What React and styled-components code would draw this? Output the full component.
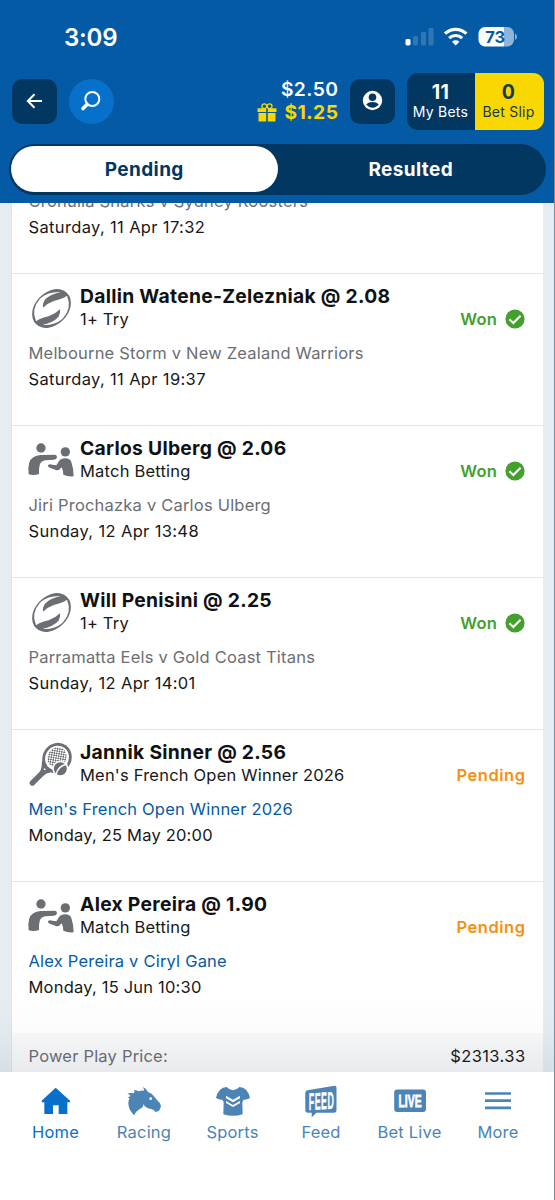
import React from "react";
import styled, { createGlobalStyle } from "styled-components";

const COLORS = {
  BLUE: "#045aa5",
  NAVY: "#023762",
  BRIGHT: "#0670cb",
  YELLOW: "#f8d800",
  GREEN: "#43a02c",
  ORANGE: "#f8900f",
  GREY: "#6b6e73",
  STEEL: "#4c84b6",
};

const GlobalStyle = createGlobalStyle`
  * {
    box-sizing: border-box;
  }
  body {
    margin: 0;
    background-color: #fff;
    font-family: Inter, "Liberation Sans", sans-serif;
  }
  svg {
    display: block;
    flex-shrink: 0;
    overflow: visible;
  }
`;

const Screen = styled.div`
  width: 555px;
  height: 1200px;
  display: flex;
  flex-direction: column;
  overflow: hidden;
  background-color: #fff;
  border-right: 1px solid #7d8b98;
`;
const Header = styled.header`
  height: 203px;
  flex-shrink: 0;
  background-color: ${COLORS.BLUE};
  margin-right: -1px;
  border-right: 1px solid #0d3c68;
`;
const StatusBar = styled.div`
  height: 72px;
  padding: 2px 37px 0 64px;
  display: flex;
  align-items: center;
  justify-content: space-between;
`;
const Clock = styled.span`
  color: #fff;
  font-size: 24px;
  font-weight: 600;
  letter-spacing: -0.2px;
`;
const Toolbar = styled.div`
  height: 58px;
  padding: 0 10px 0 12px;
  display: flex;
  align-items: center;
`;
const IconButton = styled.button`
  width: 45px;
  height: 45px;
  padding: 0;
  border: none;
  border-radius: ${(props) => (props.$round ? "50%" : "10px")};
  background-color: ${(props) => (props.$round ? COLORS.BRIGHT : COLORS.NAVY)};
  display: flex;
  align-items: center;
  justify-content: center;
  margin-right: ${(props) => (props.$round ? 0 : 12)}px;
`;
const Balance = styled.div`
  margin-left: auto;
  margin-right: 11.5px;
  display: flex;
  flex-direction: column;
  align-items: flex-end;
`;
const Amount = styled.div`
  display: flex;
  align-items: center;
  gap: 7px;
  color: ${(props) => (props.$bonus ? COLORS.YELLOW : "#fff")};
  font-size: 19.3px;
  line-height: 23px;
  font-weight: ${(props) => (props.$bonus ? 700 : 600)};
  letter-spacing: 0.45px;
`;
const Slips = styled.div`
  width: 137px;
  height: 57px;
  border-radius: 11px;
  overflow: hidden;
  display: flex;
`;
const Slip = styled.div`
  width: ${(props) => (props.$active ? 69 : 68)}px;
  padding: 8px ${(props) => (props.$active ? 2 : 1)}px 0 0;
  text-align: center;
  color: ${(props) => (props.$active ? "#173a4e" : "#fff")};
  background-color: ${(props) => (props.$active ? COLORS.YELLOW : COLORS.NAVY)};
  font-size: 14px;
  line-height: 16px;
  letter-spacing: 0.25px;
  white-space: nowrap;
`;
const Count = styled.div`
  font-size: 19.5px;
  line-height: 23px;
  font-weight: 700;
  letter-spacing: 0.4px;
`;
const Tabs = styled.div`
  height: 51px;
  margin: 14px 8px 0 9px;
  padding: 2px 2px 3px;
  border-radius: 26px;
  background-color: ${COLORS.NAVY};
  display: flex;
`;
const Tab = styled.div`
  flex: 1;
  border-radius: 23px;
  display: flex;
  align-items: center;
  justify-content: center;
  font-size: 19px;
  font-weight: 700;
  letter-spacing: 0.4px;
  color: ${(props) => (props.$active ? COLORS.NAVY : "#fff")};
  background-color: ${(props) => (props.$active ? "#fff" : "transparent")};
`;
const List = styled.main`
  height: 869px;
  flex-shrink: 0;
  padding: 0 11px;
  overflow: hidden;
  position: relative;
  background-color: #e5edf2;
`;
const Fade = styled.div`
  position: absolute;
  left: 0;
  right: 0;
  bottom: 0;
  height: 75px;
  background: linear-gradient(rgba(40, 50, 80, 0), rgba(40, 50, 80, 0.02) 50%, rgba(40, 50, 80, 0.075));
`;
const Card = styled.div`
  background-color: #fff;
  border-left: 1px solid #dce4ea;
`;
const Leg = styled.section`
  height: 152px;
  padding: 0 18px 0 16.5px;
  border-top: 1px solid #e1e4ea;
`;
const PartialLeg = styled.section`
  height: 70px;
  padding: 0 18px 33px 16.5px;
  display: flex;
  flex-direction: column;
  justify-content: flex-end;
`;
const LegTop = styled.div`
  height: 66px;
  display: flex;
`;
const LegIcon = styled.div`
  width: 52px;
  margin-left: -0.5px;
  padding-top: 12.5px;
`;
const LegText = styled.div`
  flex: 1;
  padding-top: 10px;
`;
const LegTitle = styled.div`
  font-size: 19.3px;
  line-height: 24px;
  font-weight: 700;
  letter-spacing: 0.28px;
  color: #101113;
  white-space: nowrap;
`;
const Line = styled.div`
  font-size: 16.5px;
  line-height: ${(props) => props.$height || 26}px;
  letter-spacing: ${(props) => props.$spacing || 0.2}px;
  color: ${(props) => props.$color || "#17181a"};
  white-space: nowrap;
`;
const Status = styled.div`
  height: 26px;
  margin-top: 32px;
  margin-right: ${(props) => (props.$won ? 0 : -0.5)}px;
  display: flex;
  align-items: center;
  gap: 8px;
  font-size: 16.5px;
  font-weight: 600;
  letter-spacing: ${(props) => (props.$won ? 0.2 : 0.5)}px;
  color: ${(props) => (props.$won ? COLORS.GREEN : COLORS.ORANGE)};
`;
const PriceRow = styled.div`
  height: 59px;
  padding: 10px 17.5px 0 16.5px;
  background-color: #f8f9fa;
  display: flex;
  justify-content: space-between;
`;
const Nav = styled.nav`
  height: 128px;
  flex-shrink: 0;
  padding: 0 12px 0 11px;
  display: flex;
`;
const NavItem = styled.div`
  flex: 1;
  display: flex;
  flex-direction: column;
  align-items: center;
  padding: 11px 0 0 0.5px;
  font-size: 16.5px;
  line-height: 26px;
  letter-spacing: 0.2px;
  white-space: nowrap;
  color: ${(props) => (props.$active ? COLORS.BRIGHT : COLORS.STEEL)};
`;

const StatusIcons = () => (
  <svg width="112" height="22" viewBox="405 26 112 22">
    <rect x="405.5" y="39" width="5" height="6.5" rx="1.4" fill="#fff" />
    <g fill="#2f76b5">
      <rect x="413" y="36" width="5" height="9.5" rx="1.4" />
      <rect x="421" y="32" width="5" height="13.5" rx="1.4" />
      <rect x="428.5" y="28" width="5" height="17.5" rx="1.4" />
    </g>
    <g fill="none" stroke="#fff" strokeWidth="3.2">
      <path d="M445 33.7a15.3 15.3 0 0 1 21.4 0" />
      <path d="M449.2 38.1a9.4 9.4 0 0 1 13 0" />
    </g>
    <path d="M455.7 45.5l-3.7-3.8a5.4 5.4 0 0 1 7.4 0z" fill="#fff" />
    <path d="M485 27h19v19.5h-19a6.5 6.5 0 0 1-6.5-6.5v-6.5a6.5 6.5 0 0 1 6.5-6.5z" fill="#fff" />
    <path d="M504 27h3.5a6.5 6.5 0 0 1 6.5 6.5v6.5a6.5 6.5 0 0 1-6.5 6.5h-3.5z" fill="#8db5da" />
    <path d="M515 33.5q2 1.2 2 3.3t-2 3.3z" fill="#8db5da" />
    <text x="495.3" y="42.6" textAnchor="middle" fontSize="16.5" fontWeight="700" fill={COLORS.BLUE}>
      73
    </text>
  </svg>
);

const BackIcon = () => (
  <svg width="18" height="16" viewBox="0 0 18 16" fill="none" stroke="#fff" strokeWidth="2">
    <path d="M16 8H2M8.5 1.2L1.8 8l6.7 6.8" />
  </svg>
);

const SearchIcon = () => (
  <svg width="20" height="20" viewBox="0.5 0 20 20" fill="none" stroke="#fff">
    <circle cx="10.8" cy="8" r="7" strokeWidth="2" />
    <path d="M5.5 13.5L1.5 17.5" strokeWidth="3.6" strokeLinecap="round" />
  </svg>
);

const GiftIcon = () => (
  <svg width="20" height="19" viewBox="0 0 20 19" fill={COLORS.YELLOW}>
    <g fill="none" stroke={COLORS.YELLOW} strokeWidth="1.3">
      <circle cx="7.3" cy="3.2" r="2.4" />
      <circle cx="12.6" cy="3.2" r="2.4" />
    </g>
    <path d="M.5 5.3h8.7v3.7H.5zM10.8 5.3h8.7v3.7h-8.7zM1.5 10h7.7v8.5H1.5zM10.8 10h7.7v8.5h-7.7z" />
  </svg>
);

const ProfileIcon = () => (
  <svg width="20" height="20" viewBox="0.5 0.5 20 20">
    <circle cx="10" cy="10" r="9.7" fill="#fff" />
    <circle cx="10" cy="6.8" r="3.8" fill={COLORS.NAVY} />
    <path d="M3.8 13.8q2.2-2.2 6.2-2.2t6.2 2.2q-2.3 3.4-6.2 3.4t-6.2-3.4z" fill={COLORS.NAVY} />
  </svg>
);

const TickIcon = () => (
  <svg width="20" height="20" viewBox="0 0 20 20">
    <circle cx="10" cy="10" r="9.6" fill={COLORS.GREEN} />
    <path d="M4.4 10.3l3.9 3.8 7.3-7.4" fill="none" stroke="#fff" strokeWidth="2.1" />
  </svg>
);

const RugbyIcon = () => (
  <svg width="47" height="45" viewBox="84 49 141 135">
    <ellipse cx="154.5" cy="113.5" rx="66" ry="49" transform="rotate(-45 154.5 113.5)" fill={COLORS.GREY} />
    <path
      d="M108 152Q92 116 121 83Q146 62 182 64Q148 72 134 88Q127 99 129 111Q143 97 163 90Q189 84 201 75Q217 111 188 144Q163 165 127 163Q161 155 175 139Q182 128 180 116Q166 130 146 137Q120 143 108 152Z"
      fill="#fff"
    />
  </svg>
);

const FightIcon = () => (
  <svg width="47" height="45" viewBox="84 505 141 135" fill={COLORS.GREY}>
    <circle cx="123" cy="532" r="14" />
    <circle cx="196" cy="543.5" r="14" />
    <path d="M86 611Q81 571 100 560Q108 554 122 553L165 552Q171 553 171 560Q170 567 162 567L137 569Q122 571 119 583Q116 595 117 610Q101 615 86 611Z" />
    <path d="M144 584Q148 579 157 582L169 584Q173 579 177 571Q183 563 196 563Q210 563 214 574Q221 594 221 617Q204 619 190 612Q190 601 185 590Q178 600 169 599Q160 595 149 591Q142 588 144 584Z" />
  </svg>
);

const TennisIcon = () => (
  <svg width="47" height="45" viewBox="84 518 141 135">
    <defs>
      <pattern id="strings" width="10" height="10" patternUnits="userSpaceOnUse" patternTransform="rotate(20)">
        <rect width="10" height="10" fill="#fff" />
        <rect width="5" height="5" fill={COLORS.GREY} />
        <rect x="5" y="5" width="5" height="5" fill={COLORS.GREY} />
      </pattern>
    </defs>
    <path d="M97 638L124 611" stroke={COLORS.GREY} strokeWidth="16" strokeLinecap="round" />
    <path d="M118 606Q126 597 126 570L153 606Q139 608 130 616Z" fill={COLORS.GREY} />
    <ellipse cx="171" cy="563" rx="39" ry="42" transform="rotate(35 171 563)" fill="#fff" stroke={COLORS.GREY} strokeWidth="8.5" />
    <ellipse cx="171" cy="561" rx="28" ry="31" transform="rotate(35 171 561)" fill="url(#strings)" />
    <path d="M130 598l8 1-4-6z" fill="#fff" />
    <circle cx="181" cy="595" r="24" fill="#fff" />
    <circle cx="181" cy="595" r="19.5" fill={COLORS.GREY} />
    <path d="M168 613Q172 588 202 581" fill="none" stroke="#fff" strokeWidth="4" />
  </svg>
);

const HomeIcon = () => (
  <svg width="34" height="36" viewBox="116 156 102 108" fill={COLORS.BRIGHT}>
    <path d="M166 170L209 209V214H201V249H175V223H158V249H132V214H124V209Z" />
  </svg>
);

const HorseIcon = () => (
  <svg width="36" height="36" viewBox="379 156 108 108" fill={COLORS.STEEL}>
    <path d="M404 253Q386 237 386 216Q386 207 390 201L384 201Q388 196 393 195Q389 189 383 188Q392 184 402 187Q407 182 403 177Q412 178 418 181Q424 178 434 179L430 168Q441 173 445 183Q457 187 464 197L470 205Q481 214 484 226Q482 235 477 240L467 243Q464 236 454 234Q439 233 431 220Q431 231 420 234Q409 240 404 253Z" />
    <circle cx="453" cy="203" r="4" fill="#fff" />
  </svg>
);

const ShirtIcon = () => (
  <svg width="36" height="36" viewBox="645 156 108 108" fill={COLORS.STEEL}>
    <path d="M680 168Q699 188 718 168Q730 168 738 176Q747 186 750 201Q740 207 731 206L727 213L728 250Q699 259 670 250L671 213L667 206Q657 207 648 201Q651 186 660 176Q668 168 680 168Z" />
    <path d="M678 194L699 206L720 194V202L699 214L678 202ZM678 210L699 222L720 210V216L699 228L678 216Z" fill="#fff" />
  </svg>
);

const FeedIcon = () => (
  <svg width="34" height="36" viewBox="0 0 34 36">
    <path
      d="M3.5 7.2L30.5 2.8Q32.5 2.6 32.5 4.8V27Q32.5 29.7 30 29.7H12.5L7.7 34.2V29.7H4Q1.3 29.7 1.3 27V10Q1.3 7.5 3.5 7.2Z"
      fill={COLORS.STEEL}
    />
    <text
      transform="translate(4.8 27) skewY(-3) scale(.37 1)"
      fontSize="24"
      fontWeight="700"
      fontFamily="Liberation Sans"
      fill="#fff"
      stroke="#fff"
      strokeWidth=".5"
      textLength="68"
      lengthAdjust="spacing"
    >
      FEED
    </text>
  </svg>
);

const LiveIcon = () => (
  <svg width="34" height="36" viewBox="0 0 34 36">
    <rect x="1.2" y="6.5" width="31.8" height="22.5" rx="3" fill={COLORS.STEEL} />
    <text
      x="5.4"
      y="23.8"
      fontSize="16.5"
      fontWeight="700"
      fontFamily="Liberation Sans"
      fill="#fff"
      stroke="#fff"
      strokeWidth=".8"
      textLength="23.5"
      lengthAdjust="spacingAndGlyphs"
    >
      LIVE
    </text>
  </svg>
);

const MoreIcon = () => (
  <svg width="28" height="36" viewBox="0 0 28 36" stroke={COLORS.STEEL} strokeWidth="2.7">
    <path d="M1 10.5h26M1 17.7h26M1 24.9h26" />
  </svg>
);

const legs = [
  {
    icon: RugbyIcon,
    title: "Dallin Watene-Zelezniak @ 2.08",
    market: "1+ Try",
    event: "Melbourne Storm v New Zealand Warriors",
    date: "Saturday, 11 Apr 19:37",
    won: true,
  },
  {
    icon: FightIcon,
    title: "Carlos Ulberg @ 2.06",
    market: "Match Betting",
    event: "Jiri Prochazka v Carlos Ulberg",
    date: "Sunday, 12 Apr 13:48",
    won: true,
  },
  {
    icon: RugbyIcon,
    title: "Will Penisini @ 2.25",
    market: "1+ Try",
    event: "Parramatta Eels v Gold Coast Titans",
    date: "Sunday, 12 Apr 14:01",
    won: true,
  },
  {
    icon: TennisIcon,
    title: "Jannik Sinner @ 2.56",
    market: "Men's French Open Winner 2026",
    event: "Men's French Open Winner 2026",
    date: "Monday, 25 May 20:00",
    won: false,
  },
  {
    icon: FightIcon,
    title: "Alex Pereira @ 1.90",
    market: "Match Betting",
    event: "Alex Pereira v Ciryl Gane",
    date: "Monday, 15 Jun 10:30",
    won: false,
  },
];

const navItems = [
  { icon: HomeIcon, label: "Home", active: true },
  { icon: HorseIcon, label: "Racing" },
  { icon: ShirtIcon, label: "Sports" },
  { icon: FeedIcon, label: "Feed" },
  { icon: LiveIcon, label: "Bet Live" },
  { icon: MoreIcon, label: "More" },
];

function BetLeg({ leg }) {
  const Icon = leg.icon;
  return (
    <Leg>
      <LegTop>
        <LegIcon>
          <Icon />
        </LegIcon>
        <LegText>
          <LegTitle>{leg.title}</LegTitle>
          <Line $height={23}>{leg.market}</Line>
        </LegText>
        <Status $won={leg.won}>
          {leg.won ? "Won" : "Pending"}
          {leg.won && <TickIcon />}
        </Status>
      </LegTop>
      <Line $color={leg.won ? COLORS.GREY : COLORS.BLUE}>{leg.event}</Line>
      <Line $spacing={leg.won ? 0.35 : 0.2}>{leg.date}</Line>
    </Leg>
  );
}

function App() {
  return (
    <Screen>
      <GlobalStyle />
      <Header>
        <StatusBar>
          <Clock>3:09</Clock>
          <StatusIcons />
        </StatusBar>
        <Toolbar>
          <IconButton>
            <BackIcon />
          </IconButton>
          <IconButton $round>
            <SearchIcon />
          </IconButton>
          <Balance>
            <Amount>$2.50</Amount>
            <Amount $bonus>
              <GiftIcon />
              $1.25
            </Amount>
          </Balance>
          <IconButton>
            <ProfileIcon />
          </IconButton>
          <Slips>
            <Slip>
              <Count>11</Count>
              My Bets
            </Slip>
            <Slip $active>
              <Count>0</Count>
              Bet Slip
            </Slip>
          </Slips>
        </Toolbar>
        <Tabs>
          <Tab $active>Pending</Tab>
          <Tab>Resulted</Tab>
        </Tabs>
      </Header>
      <List>
        <Card>
          <PartialLeg>
            <Line $color={COLORS.GREY}>Cronulla Sharks v Sydney Roosters</Line>
            <Line $spacing={0.35}>Saturday, 11 Apr 17:32</Line>
          </PartialLeg>
          {legs.map((leg) => (
            <BetLeg key={leg.title} leg={leg} />
          ))}
          <PriceRow>
            <Line $color={COLORS.GREY}>Power Play Price:</Line>
            <Line $spacing={0.4}>$2313.33</Line>
          </PriceRow>
        </Card>
        <Fade />
      </List>
      <Nav>
        {navItems.map(({ icon: Icon, label, active }) => (
          <NavItem key={label} $active={active}>
            <Icon />
            {label}
          </NavItem>
        ))}
      </Nav>
    </Screen>
  );
}

export default App;
